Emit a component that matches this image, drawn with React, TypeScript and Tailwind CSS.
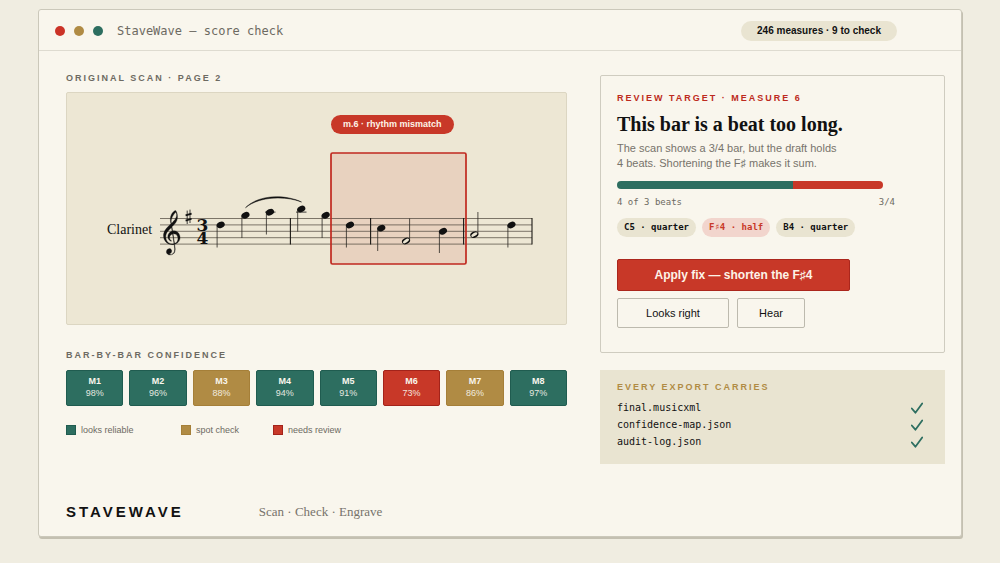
import React from 'react';

type Level = 'ok' | 'spot' | 'review';

const levelColor: Record<Level, string> = {
    ok: 'bg-[#2d6e60] border-[#205c50]',
    spot: 'bg-[#b08b44] border-[#a57f38]',
    review: 'bg-[#c83828] border-[#a3231a]',
};

const measures: { name: string; score: string; level: Level }[] = [
    { name: 'M1', score: '98%', level: 'ok' },
    { name: 'M2', score: '96%', level: 'ok' },
    { name: 'M3', score: '88%', level: 'spot' },
    { name: 'M4', score: '94%', level: 'ok' },
    { name: 'M5', score: '91%', level: 'ok' },
    { name: 'M6', score: '73%', level: 'review' },
    { name: 'M7', score: '86%', level: 'spot' },
    { name: 'M8', score: '97%', level: 'ok' },
];

const exportsList = ['final.musicxml', 'confidence-map.json', 'audit-log.json'];

const staffLines = [125.5, 131.9, 138.3, 144.7, 151.1];
const barLines = [223.4, 303.6, 396.6, 465];

// x / y of the head, y where the stem ends
const notes = [
    { x: 153.7, y: 131.9, end: 154.5 },
    { x: 178.5, y: 122.3, end: 145 },
    { x: 203, y: 119.2, end: 141.5 },
    { x: 234.3, y: 116, end: 138.5 },
    { x: 258.7, y: 122.3, end: 145 },
    { x: 283, y: 132, end: 154.5 },
    { x: 314.3, y: 135.1, end: 158 },
    { x: 339, y: 148, end: 125.5, half: true },
    { x: 376, y: 138.3, end: 160 },
    { x: 407.3, y: 141.6, end: 119, half: true },
    { x: 444.5, y: 132, end: 154.5 },
];

const clefPath =
    'm12.049 3.5296c0.305 3.1263-2.019 5.6563-4.0772 7.7014-0.9349 0.897-0.155 0.148-0.6437 0.594-0.1022-0.479-0.2986-1.731-0.2802-2.11 0.1304-2.6939 2.3198-6.5875 4.2381-8.0236 0.309 0.5767 0.563 0.6231 0.763 1.8382zm0.651 16.142c-1.232-0.906-2.85-1.144-4.3336-0.885-0.1913-1.255-0.3827-2.51-0.574-3.764 2.3506-2.329 4.9066-5.0322 5.0406-8.5394 0.059-2.232-0.276-4.6714-1.678-6.4836-1.7004 0.12823-2.8995 2.156-3.8019 3.4165-1.4889 2.6705-1.1414 5.9169-0.57 8.7965-0.8094 0.952-1.9296 1.743-2.7274 2.734-2.3561 2.308-4.4085 5.43-4.0046 8.878 0.18332 3.334 2.5894 6.434 5.8702 7.227 1.2457 0.315 2.5639 0.346 3.8241 0.099 0.2199 2.25 1.0266 4.629 0.0925 6.813-0.7007 1.598-2.7875 3.004-4.3325 2.192-0.5994-0.316-0.1137-0.051-0.478-0.252 1.0698-0.257 1.9996-1.036 2.26-1.565 0.8378-1.464-0.3998-3.639-2.1554-3.358-2.262 0.046-3.1904 3.14-1.7356 4.685 1.3468 1.52 3.833 1.312 5.4301 0.318 1.8125-1.18 2.0395-3.544 1.8325-5.562-0.07-0.678-0.403-2.67-0.444-3.387 0.697-0.249 0.209-0.059 1.193-0.449 2.66-1.053 4.357-4.259 3.594-7.122-0.318-1.469-1.044-2.914-2.302-3.792zm0.561 5.757c0.214 1.991-1.053 4.321-3.079 4.96-0.136-0.795-0.172-1.011-0.2626-1.475-0.4822-2.46-0.744-4.987-1.116-7.481 1.6246-0.168 3.4576 0.543 4.0226 2.184 0.244 0.577 0.343 1.197 0.435 1.812zm-5.1486 5.196c-2.5441 0.141-4.9995-1.595-5.6343-4.081-0.749-2.153-0.5283-4.63 0.8207-6.504 1.1151-1.702 2.6065-3.105 4.0286-4.543 0.183 1.127 0.366 2.254 0.549 3.382-2.9906 0.782-5.0046 4.725-3.215 7.451 0.5324 0.764 1.9765 2.223 2.7655 1.634-1.102-0.683-2.0033-1.859-1.8095-3.227-0.0821-1.282 1.3699-2.911 2.6513-3.198 0.4384 2.869 0.9413 6.073 1.3797 8.943-0.5054 0.1-1.0211 0.143-1.536 0.143z';

function Score() {
    return (
        <svg viewBox="0 0 499 231" className="block w-full" role="img" aria-label="Clarinet part, measures 4 to 7">
            {/* Flagged measure */}
            <rect x="264" y="60" width="135" height="111" rx="1.5" fill="#c83828" fillOpacity="0.12" />

            {staffLines.map((y) => (
                <line key={y} x1="93" x2="465" y1={y} y2={y} stroke="#4a4439" strokeWidth="0.7" />
            ))}
            {barLines.map((x) => (
                <line key={x} x1={x} x2={x} y1="125" y2="151.4" stroke="#1a1814" strokeWidth="1.1" />
            ))}

            <text x="40" y="141" fontSize="14" fill="#111" className="font-['Liberation_Serif',serif]">
                Clarinet
            </text>

            <path d={clefPath} transform="translate(96.5 117.5) scale(1.09)" fill="#111" stroke="#111" strokeWidth="0.3" />

            {/* Key signature */}
            <g stroke="#111" fill="none">
                <path d="M120.2 117.6v13.4M123 116.6v13.4" strokeWidth="0.8" />
                <path d="M118.6 122.4l6-1.8M118.6 127.6l6-1.8" strokeWidth="1.7" />
            </g>

            {/* Time signature */}
            <text fontSize="17" fontWeight="700" fill="#111" textAnchor="middle" className="font-['DejaVu_Serif',serif]">
                <tspan x="135.5" y="138">3</tspan>
                <tspan x="135.5" y="151">4</tspan>
            </text>

            {/* Ledger lines and slur */}
            <path d="M198 119.1h10.5M229 119.1h10.5" stroke="#111" strokeWidth="0.8" />
            <path d="M178.5 114.7C192 101 219 101.5 234.5 109C219 103 193 102.8 178.5 114.7Z" fill="#111" stroke="#111" strokeWidth="0.5" strokeLinejoin="round" />

            {notes.map((n) => {
                const stemX = n.end < n.y ? n.x + 3.6 : n.x - 3.6;
                return (
                    <g key={n.x}>
                        <line x1={stemX} x2={stemX} y1={n.y} y2={n.end} stroke="#2a2722" strokeWidth="0.8" />
                        <ellipse cx={n.x} cy={n.y} rx="4.2" ry="3.1" transform={`rotate(-24 ${n.x} ${n.y})`} fill="#111" />
                        {n.half && (
                            <ellipse cx={n.x} cy={n.y} rx="3.4" ry="1.5" transform={`rotate(-34 ${n.x} ${n.y})`} fill="#ede7d4" />
                        )}
                    </g>
                );
            })}

            <rect x="264" y="60" width="135" height="111" rx="1.5" fill="none" stroke="#c0291f" strokeWidth="1.7" />
        </svg>
    );
}

function Check() {
    return (
        <svg viewBox="0 0 12 12" className="h-3 w-3" aria-hidden="true">
            <path d="M0.8 6.5L4.4 10.7L11.2 1.5" fill="none" stroke="#2d6e60" strokeWidth="1.8" strokeLinecap="round" strokeLinejoin="round" />
        </svg>
    );
}

function Label({ children, className }: { children: React.ReactNode; className: string }) {
    return <h2 className={`text-[9px] leading-3 font-bold tracking-[2px] uppercase ${className}`}>{children}</h2>;
}

function Swatch({ level }: { level: Level }) {
    return <span className={`h-[10px] w-[10px] border ${levelColor[level]}`} />;
}

export default function App() {
    return (
        <div className="min-h-screen bg-[#f0ede1] px-[38px] pt-[9px] pb-[26px] font-['Liberation_Sans',sans-serif] text-[#111]">
            <main className="rounded-[3px] border border-[#cbc8ba] bg-[#f9f6ed] shadow-[1px_2px_0_#c4c0b1]">
                <header className="flex h-[41px] items-center border-b border-[#dedbd0] pt-[2px] pr-16 pl-4">
                    <div className="flex gap-[9px]">
                        <span className="h-[10px] w-[10px] rounded-full bg-[#cb3327]" />
                        <span className="h-[10px] w-[10px] rounded-full bg-[#b08b44]" />
                        <span className="h-[10px] w-[10px] rounded-full bg-[#2d6e60]" />
                    </div>
                    <h1 className="ml-[14px] font-['DejaVu_Sans_Mono',monospace] text-[12px] text-[#6d6a62]">StaveWave — score check</h1>
                    <span className="ml-auto rounded-full bg-[#e9e4d1] px-4 text-[10px] leading-5 font-bold">
                        246 measures · 9 to check
                    </span>
                </header>

                <div className="grid grid-cols-[501fr_345fr] gap-x-[33px] pr-4 pl-[27px]">
                    <div className="pt-[21px]">
                        <section>
                            <Label className="text-[#6d6a62]">Original scan · page 2</Label>
                            <div className="relative mt-2 rounded-[2px] border border-[#dcd6c2] bg-[#ede7d4]">
                                <Score />
                                <span className="absolute top-[22px] left-[264px] rounded-full bg-[#c83828] px-3 text-[9px] leading-[19px] font-bold text-[#fdf3e7]">
                                    m.6 · rhythm mismatch
                                </span>
                            </div>
                        </section>

                        <section className="mt-6">
                            <Label className="text-[#6d6a62]">Bar-by-bar confidence</Label>
                            <ul className="mt-[9px] grid grid-cols-8 gap-[6px] text-center text-[9px] leading-3 text-[#f9f6ed]">
                                {measures.map((m) => (
                                    <li key={m.name} className={`rounded-[2px] border pt-1 pb-[6px] ${levelColor[m.level]}`}>
                                        <strong className="block">{m.name}</strong>
                                        <span className="block opacity-90">{m.score}</span>
                                    </li>
                                ))}
                            </ul>
                            <ul className="mt-[18px] flex text-[9px] leading-3 text-[#6d6a62]">
                                <li className="flex w-[115px] items-center gap-[5px]">
                                    <Swatch level="ok" />
                                    looks reliable
                                </li>
                                <li className="flex w-[92px] items-center gap-[5px]">
                                    <Swatch level="spot" />
                                    spot check
                                </li>
                                <li className="flex items-center gap-[5px]">
                                    <Swatch level="review" />
                                    needs review
                                </li>
                            </ul>
                        </section>
                    </div>

                    <div className="pt-6">
                        <section className="rounded-[2px] border border-[#cfccc0] px-4 pt-4 pb-6">
                            <Label className="text-[#bd2a20]">Review target · measure 6</Label>
                            <h3 className="mt-[6px] font-['Liberation_Serif',serif] text-[20px] leading-7 font-bold">This bar is a beat too long.</h3>
                            <p className="mt-[3px] text-[11px] leading-[15px] text-[#77736b]">
                                The scan shows a 3/4 bar, but the draft holds
                                <br />
                                4 beats. Shortening the F♯ makes it sum.
                            </p>
                            <div className="mt-[10px] flex h-2 w-[266px] overflow-hidden rounded-full">
                                <span className="w-[66%] bg-[#2d6e60]" />
                                <span className="flex-1 bg-[#c83828]" />
                            </div>
                            <div className="mt-[7px] flex w-[278px] justify-between font-['DejaVu_Sans_Mono',monospace] text-[9px] leading-3 text-[#6d6a62]">
                                <span>4 of 3 beats</span>
                                <span>3/4</span>
                            </div>
                            <ul className="mt-[10px] flex gap-[6px] font-['DejaVu_Sans_Mono',monospace] text-[9px] leading-[19px] font-bold">
                                <li className="rounded-full bg-[#e9e4d1] px-[7px]">C5 · quarter</li>
                                <li className="rounded-full bg-[#f2d5cd] px-[7px] text-[#c83828]">F♯4 · half</li>
                                <li className="rounded-full bg-[#e9e4d1] px-[7px]">B4 · quarter</li>
                            </ul>
                            <button type="button" className="mt-[22px] block h-8 w-[233px] rounded-[2px] border border-[#ab261c] bg-[#c83828] text-[12px] font-bold text-[#fdf3e7]">
                                Apply fix — shorten the F♯4
                            </button>
                            <div className="mt-[7px] flex gap-2 text-[11px]">
                                <button type="button" className="h-[30px] w-[112px] rounded-[2px] border border-[#bdbaae]">
                                    Looks right
                                </button>
                                <button type="button" className="h-[30px] w-[68px] rounded-[2px] border border-[#bdbaae]">
                                    Hear
                                </button>
                            </div>
                        </section>

                        <section className="mt-[17px] bg-[#e9e4d1] pt-[11px] pr-[22px] pb-[14px] pl-[17px]">
                            <Label className="text-[#b08b44]">Every export carries</Label>
                            <ul className="mt-[6px] font-['DejaVu_Sans_Mono',monospace] text-[10px] leading-[17px]">
                                {exportsList.map((file) => (
                                    <li key={file} className="flex items-center justify-between">
                                        {file}
                                        <Check />
                                    </li>
                                ))}
                            </ul>
                        </section>
                    </div>
                </div>

                <footer className="flex items-center gap-[75px] pt-[38px] pr-4 pb-[14px] pl-[27px]">
                    <strong className="text-[15px] leading-5 tracking-[3px]">STAVEWAVE</strong>
                    <span className="font-['Liberation_Serif',serif] text-[13px] leading-5 text-[#77736b]">Scan · Check · Engrave</span>
                </footer>
            </main>
        </div>
    );
}
